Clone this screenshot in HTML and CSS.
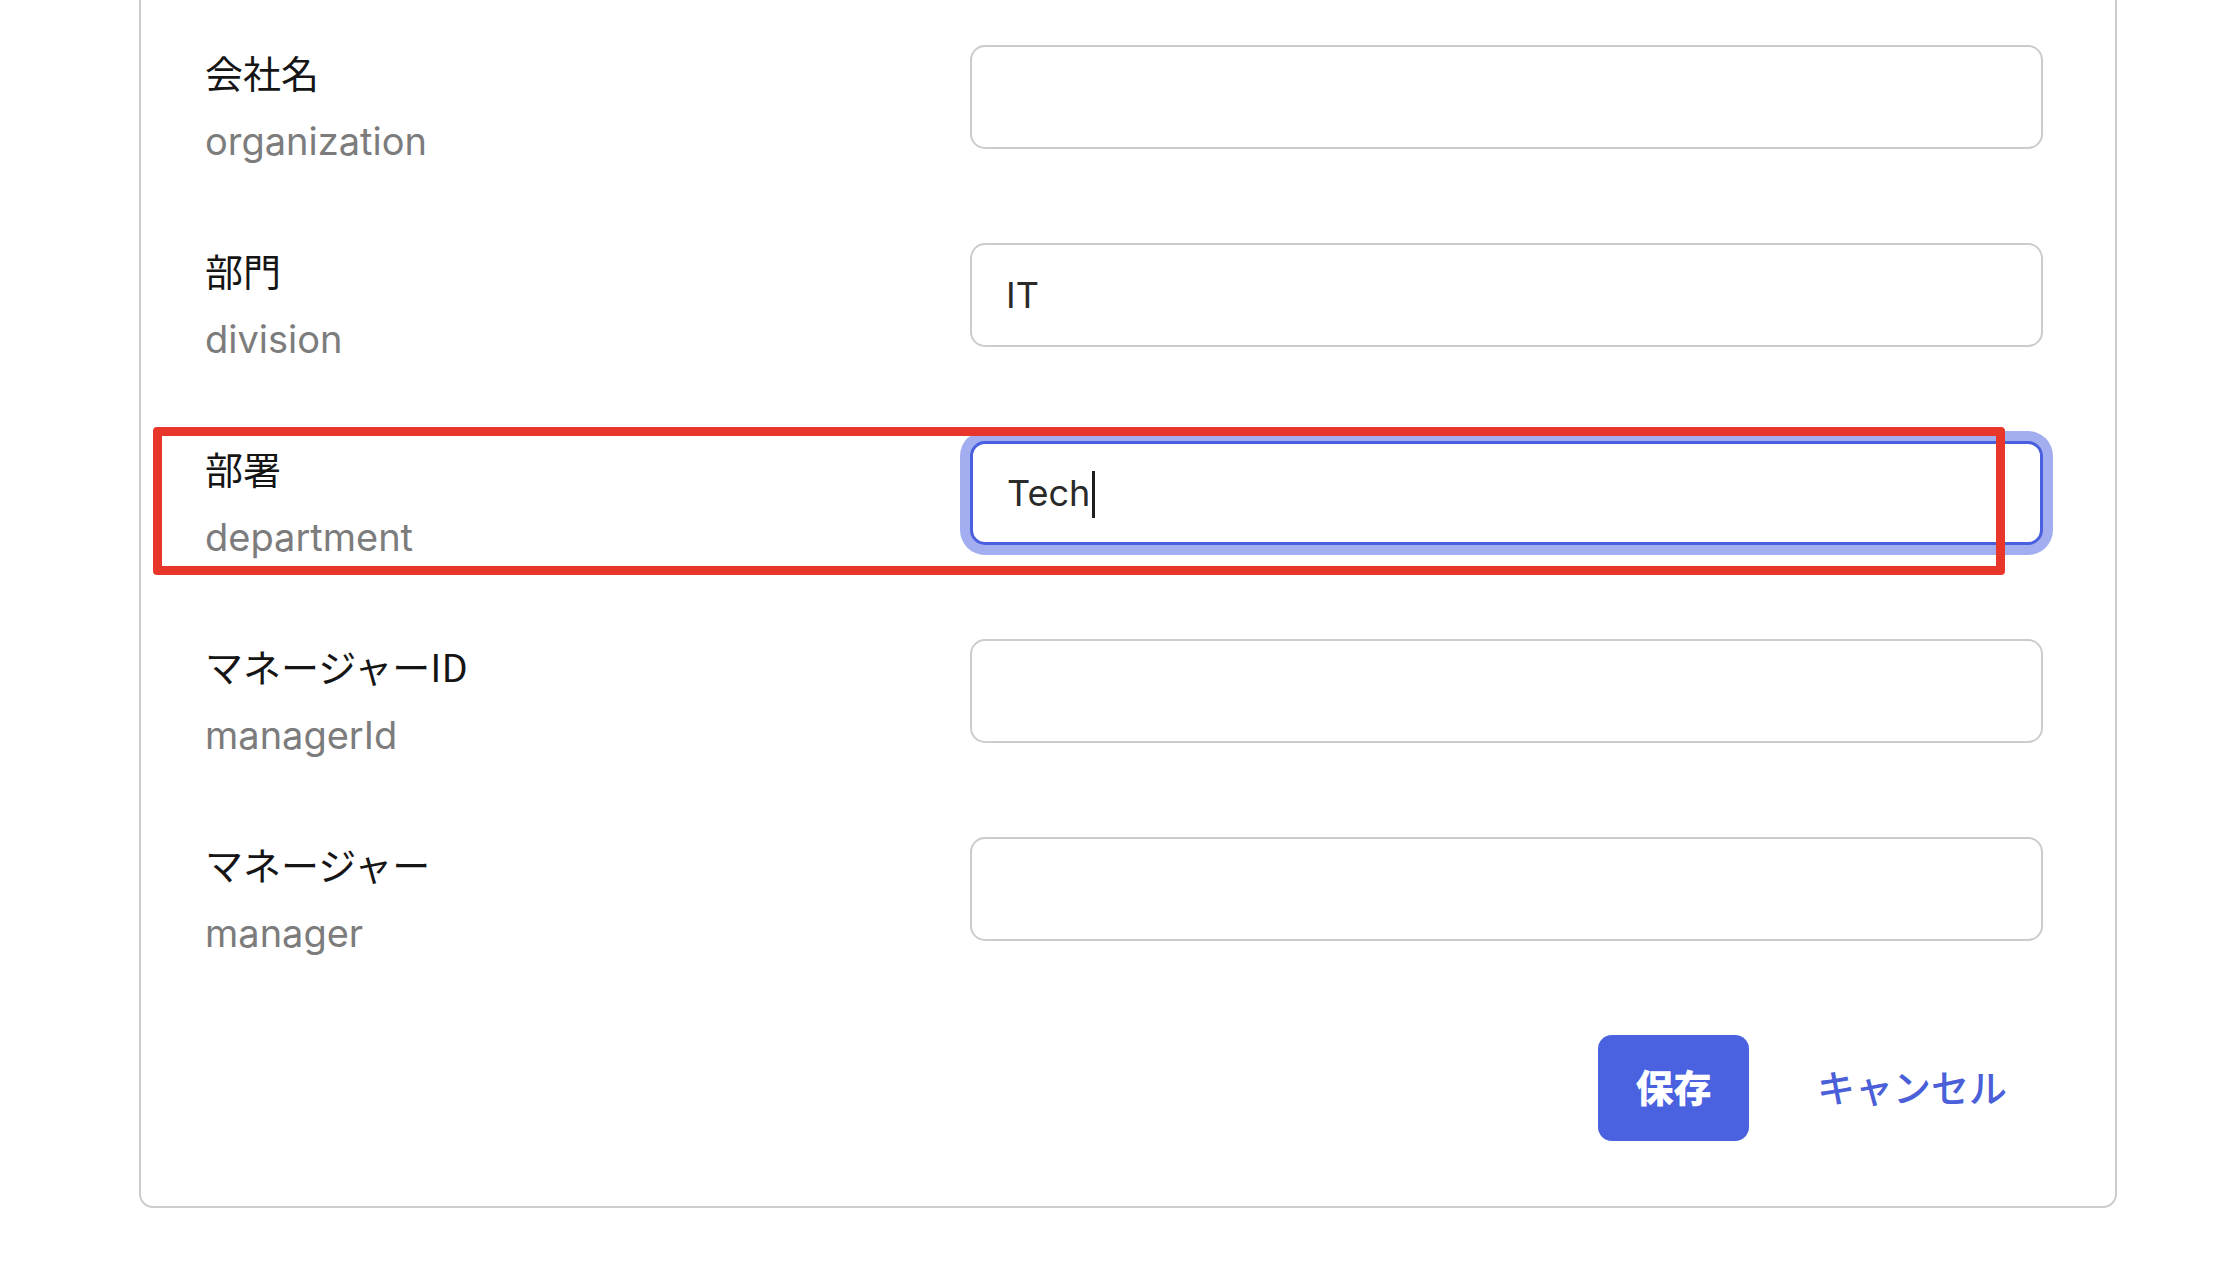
FILE: index.html
```html
<!DOCTYPE html>
<html lang="ja">
<head>
<meta charset="utf-8">
<title>Form</title>
<link rel="stylesheet" href="styles.css">
</head>
<body>
<div class="card">
  <div class="form">
    <div class="row">
      <div class="label"><div class="jp">会社名</div><div class="en">organization</div></div>
      <input class="field" type="text" value="">
    </div>
    <div class="row">
      <div class="label"><div class="jp">部門</div><div class="en">division</div></div>
      <input class="field" type="text" value="IT">
    </div>
    <div class="row">
      <div class="label"><div class="jp">部署</div><div class="en">department</div></div>
      <div class="field focused" role="textbox">Tech<span class="caret"></span></div>
    </div>
    <div class="row">
      <div class="label"><div class="jp">マネージャーID</div><div class="en">managerId</div></div>
      <input class="field" type="text" value="">
    </div>
    <div class="row">
      <div class="label"><div class="jp">マネージャー</div><div class="en">manager</div></div>
      <input class="field" type="text" value="">
    </div>
  </div>
  <div class="actions">
    <button class="btn-save" type="button">保存</button>
    <button class="btn-cancel" type="button">キャンセル</button>
  </div>
</div>
<div class="highlight"></div>
</body>
</html>
```

FILE: styles.css
```css
html, body {
  margin: 0;
  padding: 0;
  background: #ffffff;
}

body {
  position: relative;
  width: 2234px;
  height: 1269px;
  overflow: hidden;
  font-family: "Inter", "Noto Sans CJK JP", sans-serif;
}

.card {
  box-sizing: border-box;
  margin-top: -40px;
  margin-left: 139px;
  width: 1978px;
  border: 2px solid #cccccc;
  border-radius: 14px;
  padding: 83px 72px 65px 64px;
  background: #fff;
}

.form {
  display: flex;
  flex-direction: column;
  gap: 79px;
}

.row {
  display: grid;
  grid-template-columns: 765px 1073px;
  align-items: start;
}

.label {
  padding-top: 7px;
  display: flex;
  flex-direction: column;
}

.jp {
  font-family: "Noto Sans CJK JP", sans-serif;
  font-size: 38px;
  line-height: 40px;
  font-weight: 400;
  color: #151515;
}

.en {
  margin-top: 26px;
  font-family: "Inter", sans-serif;
  font-size: 38px;
  line-height: 46px;
  color: #7c7c7c;
}

.field {
  box-sizing: border-box;
  display: block;
  width: 1073px;
  height: 104px;
  margin: 0;
  padding: 0 34px;
  border: 2px solid #cccccc;
  border-radius: 15px;
  background: #fff;
  font-family: "Inter", sans-serif;
  font-size: 36px;
  color: #2a2a2a;
  outline: none;
}

.focused {
  display: flex;
  align-items: center;
  border: 3px solid #4a5fe0;
  box-shadow: 0 0 0 10px #a3aef0;
  padding-left: 34px;
}

.caret {
  display: inline-block;
  width: 3px;
  height: 47px;
  margin-left: 2px;
  background: #1e1e1e;
  transform: translateY(1px);
}

.actions {
  display: flex;
  justify-content: flex-end;
  align-items: center;
  gap: 32px;
  margin-top: 79px;
}

.btn-save {
  box-sizing: border-box;
  width: 151px;
  height: 106px;
  border: none;
  border-radius: 14px;
  background: #4a62df;
  color: #fff;
  font-family: "Noto Sans CJK JP", sans-serif;
  font-weight: 900;
  font-size: 38px;
  padding: 0 0 5px;
}

.btn-cancel {
  box-sizing: border-box;
  height: 106px;
  border: none;
  background: transparent;
  color: #4a5fd8;
  font-family: "Noto Sans CJK JP", sans-serif;
  font-weight: 500;
  font-size: 38px;
  padding: 0 36px 5px;
}

.highlight {
  position: absolute;
  left: 153px;
  top: 427px;
  width: 1852px;
  height: 148px;
  box-sizing: border-box;
  border: 9px solid #e8362b;
  border-radius: 4px;
  pointer-events: none;
}
```
